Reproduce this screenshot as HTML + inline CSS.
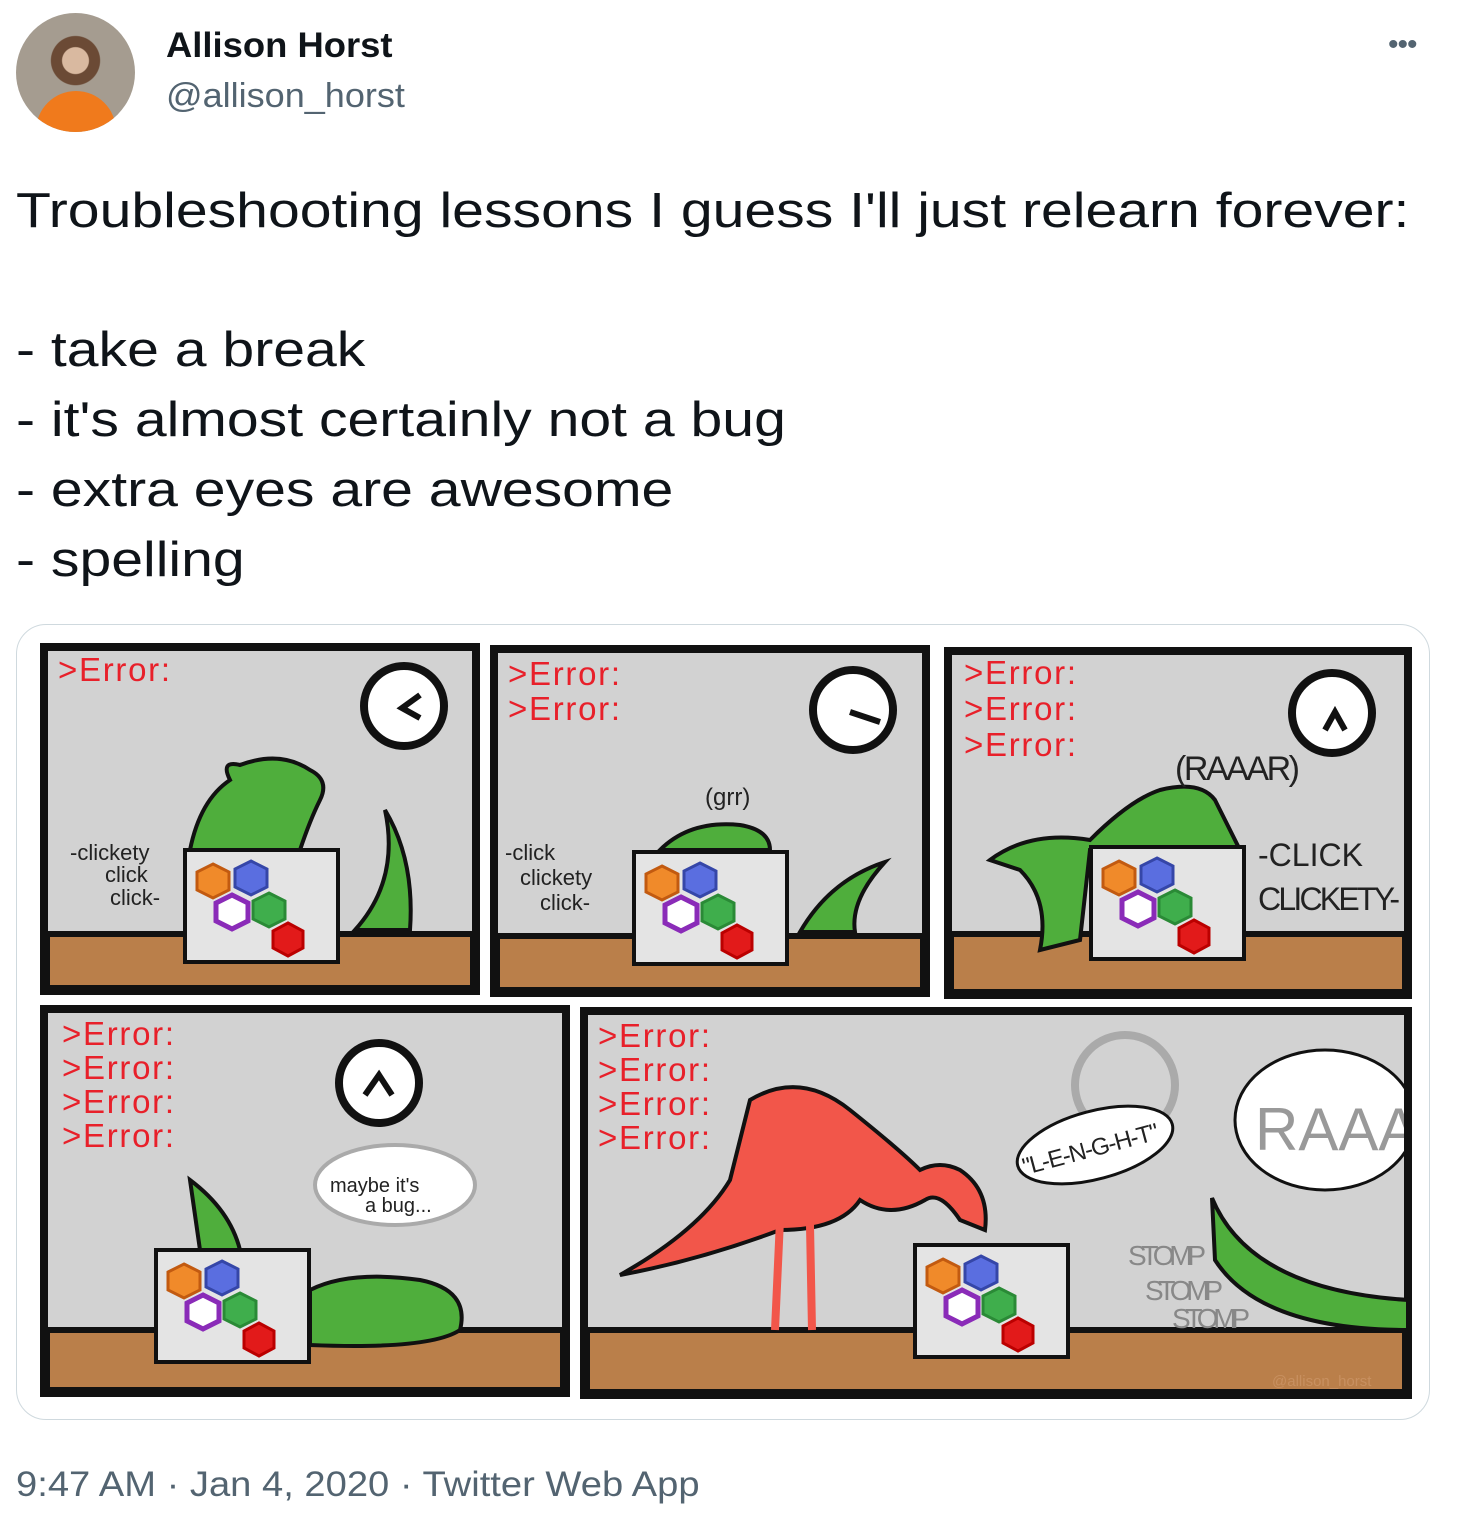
<!DOCTYPE html>
<html><head><meta charset="utf-8"><style>
*{margin:0;padding:0;box-sizing:border-box}
body{width:1462px;height:1515px;background:#fff;font-family:"Liberation Sans",sans-serif;position:relative;overflow:hidden;color:#0f1419}
.abs{position:absolute;white-space:nowrap}
.t{font-size:49px;left:16px;line-height:70px;transform:scaleX(1.166);transform-origin:0 0}
</style></head><body>
<div class="abs" style="left:16px;top:13px;width:119px;height:119px;border-radius:50%;background:radial-gradient(circle at 50% 40%,#d9b9a0 0 14%,#6b4a35 15% 26%,#a59c90 27%);overflow:hidden">
<div style="position:absolute;left:20px;top:78px;width:80px;height:50px;background:#f07a1c;border-radius:40px 40px 0 0"></div></div>
<div class="abs" style="left:166px;top:26px;font-size:35px;font-weight:bold;transform:scaleX(1.04);transform-origin:0 0">Allison Horst</div>
<div class="abs" style="left:166px;top:77px;font-size:34px;color:#536471;transform:scaleX(1.06);transform-origin:0 0">@allison_horst</div>
<div class="abs" style="left:1388px;top:28px;font-size:30px;color:#536471;letter-spacing:-1px">•••</div>
<div class="abs t" style="top:176px">Troubleshooting lessons I guess I'll just relearn forever:</div>
<div class="abs t" style="top:315px">- take a break</div>
<div class="abs t" style="top:385px">- it's almost certainly not a bug</div>
<div class="abs t" style="top:455px">- extra eyes are awesome</div>
<div class="abs t" style="top:525px">- spelling</div>
<div class="abs" style="left:16px;top:624px;width:1414px;height:796px;border:1.5px solid #cfd9de;border-radius:30px;background:#fff"></div>
<svg class="abs" style="left:0;top:0" width="1462" height="1515" viewBox="0 0 1462 1515">
<defs>
<g id="lap">
<rect x="0" y="0" width="153" height="112" fill="#e4e4e4" stroke="#111" stroke-width="4"/>
<polygon points="28,14 44,22 44,40 28,48 12,40 12,22" fill="#f08a2a" stroke="#c25a10" stroke-width="3"/>
<polygon points="66,11 82,19 82,37 66,45 50,37 50,19" fill="#5a6ee0" stroke="#3546a8" stroke-width="3"/>
<polygon points="47,45 63,53 63,71 47,79 31,71 31,53" fill="#fff" stroke="#8a2bb8" stroke-width="5"/>
<polygon points="84,43 100,51 100,69 84,77 68,69 68,51" fill="#3fae4c" stroke="#2a8a36" stroke-width="3"/>
<polygon points="103,73 118,81 118,98 103,106 88,98 88,81" fill="#e21a1a" stroke="#b00" stroke-width="3"/>
</g>
<g id="clk"><circle r="40" fill="#fff" stroke="#111" stroke-width="8"/></g>
<clipPath id="c5"><rect x="588" y="1015" width="816" height="376"/></clipPath>
<clipPath id="c3"><rect x="952" y="655" width="452" height="336"/></clipPath>
</defs>
<g stroke="#111" stroke-width="8">
<rect x="44" y="647" width="432" height="344" fill="#d2d2d2"/>
<rect x="494" y="649" width="432" height="344" fill="#d2d2d2"/>
<rect x="948" y="651" width="460" height="344" fill="#d2d2d2"/>
<rect x="44" y="1009" width="522" height="384" fill="#d2d2d2"/>
<rect x="584" y="1011" width="824" height="384" fill="#d2d2d2"/>
</g>
<g fill="#ba7f4a" stroke="#111" stroke-width="6">
<rect x="47" y="934" width="426" height="54"/>
<rect x="497" y="936" width="426" height="54"/>
<rect x="951" y="934" width="454" height="58"/>
<rect x="47" y="1330" width="516" height="60"/>
<rect x="587" y="1330" width="818" height="62"/>
</g>
<g fill="#4fae3c" stroke="#111" stroke-width="4">
<path d="M190 850 Q200 800 230 780 Q220 760 240 765 Q280 750 310 770 Q330 780 320 800 Q310 820 300 850 Z"/>
<path d="M355 930 Q400 880 385 810 Q415 860 410 930 Z"/>
<path d="M660 850 Q690 820 740 825 Q770 830 770 850 Z"/>
<path d="M800 932 Q830 880 885 862 Q850 900 855 932 Z"/>
<path d="M990 860 Q1030 830 1090 840 Q1130 800 1160 790 Q1200 780 1215 800 L1240 850 L1090 850 L1080 940 L1040 950 Q1050 900 1020 870 Z"/>
<path d="M190 1180 Q230 1210 240 1250 L200 1250 Z"/>
<path d="M310 1290 Q350 1270 420 1280 Q470 1290 460 1330 Q430 1350 310 1345 Z"/>
<path d="M1212 1198 Q1250 1290 1408 1300 L1408 1330 Q1260 1330 1215 1260 Z"/>
</g>
<g fill="#f2564a" stroke="#111" stroke-width="4">
<path d="M750 1100 Q800 1070 850 1110 Q900 1150 920 1170 Q940 1160 960 1170 Q990 1190 985 1230 L960 1220 Q940 1190 925 1200 Q890 1220 860 1200 Q840 1230 780 1230 Q700 1260 620 1275 Q700 1230 730 1180 Z"/>
<path d="M780 1220 L775 1330 M810 1225 L812 1330" fill="none" stroke="#f2564a" stroke-width="8"/>
</g>
<g font-family="Liberation Sans,sans-serif" fill="#e8202a" font-size="33" textLength="112">
<text x="58" y="681" textLength="112">&gt;Error:</text>
<text x="508" y="685" textLength="112">&gt;Error:</text><text x="508" y="720" textLength="112">&gt;Error:</text>
<text x="964" y="684" textLength="112">&gt;Error:</text><text x="964" y="720" textLength="112">&gt;Error:</text><text x="964" y="756" textLength="112">&gt;Error:</text>
<text x="62" y="1045" textLength="112">&gt;Error:</text><text x="62" y="1079" textLength="112">&gt;Error:</text><text x="62" y="1113" textLength="112">&gt;Error:</text><text x="62" y="1147" textLength="112">&gt;Error:</text>
<text x="598" y="1047" textLength="112">&gt;Error:</text><text x="598" y="1081" textLength="112">&gt;Error:</text><text x="598" y="1115" textLength="112">&gt;Error:</text><text x="598" y="1149" textLength="112">&gt;Error:</text>
</g>
<use href="#clk" x="404" y="706"/><use href="#clk" x="853" y="710"/><use href="#clk" x="1332" y="713"/><use href="#clk" x="379" y="1083"/>
<circle cx="1125" cy="1085" r="50" fill="none" stroke="#aaa" stroke-width="8"/>
<g stroke="#111" stroke-width="6" fill="none">
<path d="M420 695 L402 708 L420 718"/><path d="M850 712 L880 722"/><path d="M1325 730 L1335 712 L1345 730"/><path d="M365 1095 L379 1075 L392 1095"/>
</g>
<use href="#lap" x="185" y="850"/><use href="#lap" x="634" y="852"/><use href="#lap" x="1091" y="847"/><use href="#lap" x="156" y="1250"/><use href="#lap" x="915" y="1245"/>
<g clip-path="url(#c5)">
<ellipse cx="1325" cy="1120" rx="90" ry="70" fill="#fff" stroke="#111" stroke-width="3"/>
<text x="1255" y="1150" font-size="60" fill="#999" font-family="Liberation Sans,sans-serif">RAAAA</text>
</g>
<ellipse cx="1095" cy="1145" rx="80" ry="34" fill="#fff" stroke="#111" stroke-width="3" transform="rotate(-15 1095 1145)"/>
<ellipse cx="395" cy="1185" rx="80" ry="40" fill="#fff" stroke="#aaa" stroke-width="4"/>
<g font-family="Liberation Sans,sans-serif" fill="#222">
<text x="70" y="860" font-size="22">-clickety</text><text x="105" y="882" font-size="22">click</text><text x="110" y="905" font-size="22">click-</text>
<text x="505" y="860" font-size="22">-click</text><text x="520" y="885" font-size="22">clickety</text><text x="540" y="910" font-size="22">click-</text>
<text x="705" y="805" font-size="24">(grr)</text>
<text x="1175" y="780" font-size="34" textLength="125">(RAAAR)</text>
<text x="1258" y="866" font-size="32">-CLICK</text><text x="1258" y="910" font-size="32" textLength="142">CLICKETY-</text>
<text x="330" y="1192" font-size="20">maybe it's</text><text x="365" y="1212" font-size="20">a bug...</text>
<text x="1025" y="1175" font-size="24" transform="rotate(-15 1025 1175)" textLength="140">"L-E-N-G-H-T"</text>
<text x="1128" y="1265" font-size="28" fill="#888" textLength="78">STOMP</text><text x="1145" y="1300" font-size="28" fill="#888" textLength="78">STOMP</text><text x="1172" y="1328" font-size="28" fill="#888" textLength="78">STOMP</text>
<text x="1272" y="1386" font-size="15" fill="#c89060">@allison_horst</text>
</g>
</svg>
<div class="abs" style="left:16px;top:1465px;font-size:35px;color:#536471;transform:scaleX(1.09);transform-origin:0 0">9:47 AM · Jan 4, 2020 · Twitter Web App</div>
</body></html>
